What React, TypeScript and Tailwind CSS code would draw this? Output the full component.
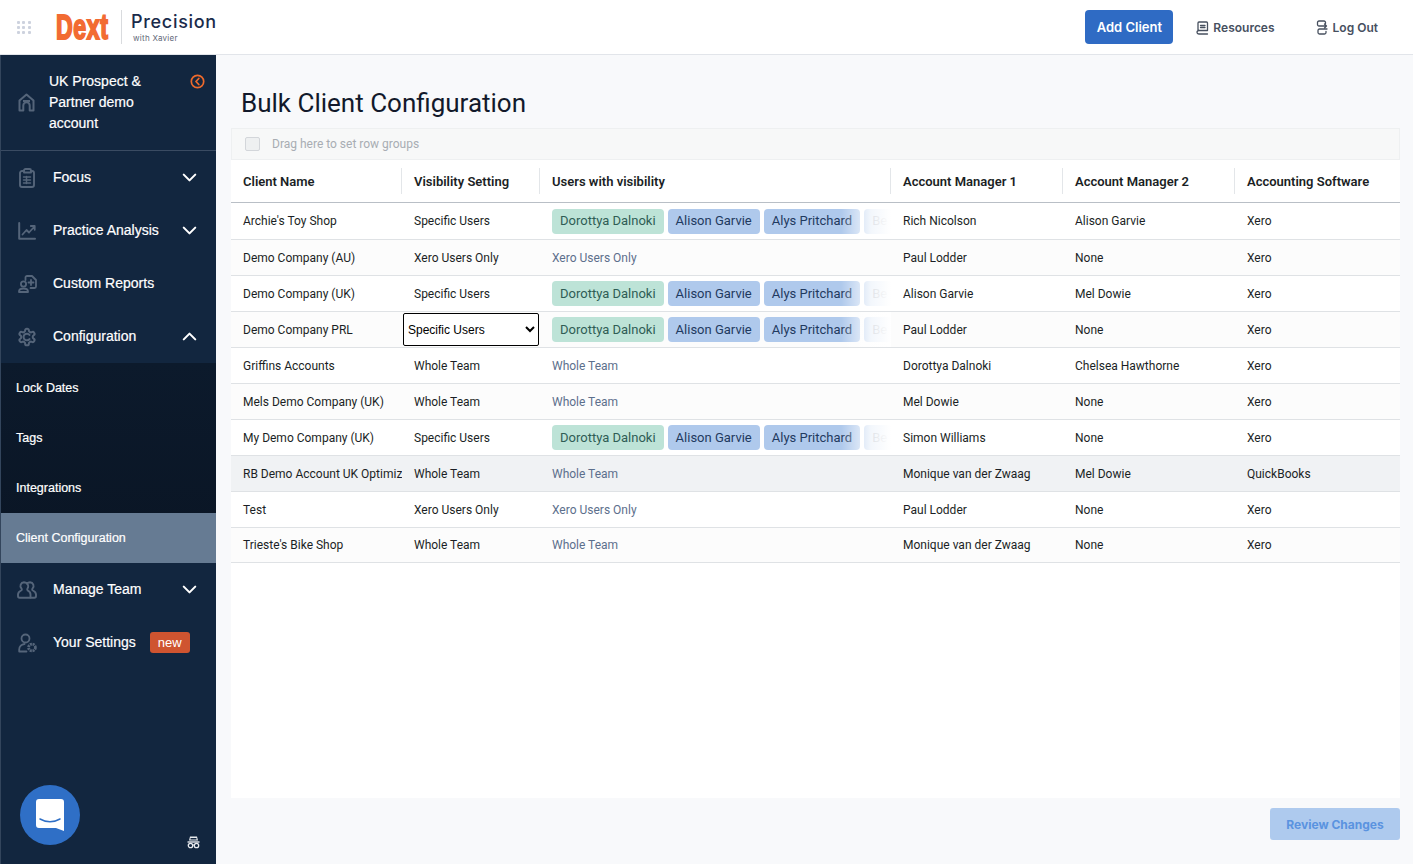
import { ChevronDown, ChevronUp } from 'lucide-react';
import type { ReactNode } from 'react';

const tagGreen = 'bg-[#bde3d7] text-[#2f5d55]';
const tagBlue = 'bg-[#afc9ec] text-[#1f3a5f]';

const rows = [
  { name: "Archie's Toy Shop", vis: 'Specific Users', users: 'tags', am1: 'Rich Nicolson', am2: 'Alison Garvie', sw: 'Xero', h: 'h-[37px]' },
  { name: 'Demo Company (AU)', vis: 'Xero Users Only', users: 'Xero Users Only', am1: 'Paul Lodder', am2: 'None', sw: 'Xero', h: 'h-[36px]' },
  { name: 'Demo Company (UK)', vis: 'Specific Users', users: 'tags', am1: 'Alison Garvie', am2: 'Mel Dowie', sw: 'Xero', h: 'h-[36px]' },
  { name: 'Demo Company PRL', vis: 'select', users: 'tags', am1: 'Paul Lodder', am2: 'None', sw: 'Xero', h: 'h-[36px]' },
  { name: 'Griffins Accounts', vis: 'Whole Team', users: 'Whole Team', am1: 'Dorottya Dalnoki', am2: 'Chelsea Hawthorne', sw: 'Xero', h: 'h-[36px]' },
  { name: 'Mels Demo Company (UK)', vis: 'Whole Team', users: 'Whole Team', am1: 'Mel Dowie', am2: 'None', sw: 'Xero', h: 'h-[36px]' },
  { name: 'My Demo Company (UK)', vis: 'Specific Users', users: 'tags', am1: 'Simon Williams', am2: 'None', sw: 'Xero', h: 'h-[36px]' },
  { name: 'RB Demo Account UK Optimiz', vis: 'Whole Team', users: 'Whole Team', am1: 'Monique van der Zwaag', am2: 'Mel Dowie', sw: 'QuickBooks', h: 'h-[36px]' },
  { name: 'Test', vis: 'Xero Users Only', users: 'Xero Users Only', am1: 'Paul Lodder', am2: 'None', sw: 'Xero', h: 'h-[36px]' },
  { name: "Trieste's Bike Shop", vis: 'Whole Team', users: 'Whole Team', am1: 'Monique van der Zwaag', am2: 'None', sw: 'Xero', h: 'h-[35px]' },
];

const iconGrey = '#55657a';

function HomeIcon() {
  return (
    <svg width="17" height="19" viewBox="0 0 17 19" fill="none" stroke={iconGrey} strokeWidth="2" strokeLinejoin="round">
      <path d="M1.500 7.500 8.500 1.500l7 6V17.500h-3.800V12.500a3.200 3.200 0 0 0-6.400 0v5H1.500z" />
      <path d="M5 8h7" />
    </svg>
  );
}

function FocusIcon() {
  return (
    <svg width="16" height="20" viewBox="0 0 16 20" fill="none" stroke={iconGrey} strokeWidth="1.900" strokeLinejoin="round" strokeLinecap="round">
      <path d="M5 3H3a2 2 0 0 0-2 2v12a2 2 0 0 0 2 2h10a2 2 0 0 0 2-2V5a2 2 0 0 0-2-2h-1" />
      <path d="M5 4.500V2.500C5 1.700 5.700 1 6.500 1h4c.8 0 1.500.7 1.500 1.500v2z" />
      <path d="M4.500 9h7M4.500 12h7M4.500 15h7M7.500 8.500v7" strokeWidth="1.500" />
    </svg>
  );
}

function AnalysisIcon() {
  return (
    <svg width="18" height="18" viewBox="0 0 18 18" fill="none" stroke={iconGrey} strokeWidth="2" strokeLinejoin="round" strokeLinecap="round">
      <path d="M1.200 1v15.800h15.800" />
      <path d="M4.500 12.500 8.500 8l2.500 2.500 5.500-6M12.800 4h3.900v3.800" strokeWidth="1.800" />
    </svg>
  );
}

function ReportsIcon() {
  return (
    <svg width="19" height="18" viewBox="0 0 19 18" fill="none" stroke={iconGrey} strokeWidth="1.800" strokeLinejoin="round" strokeLinecap="round">
      <circle cx="5.500" cy="9" r="2.600" />
      <path d="M1 17v-.5C1 14.500 3 13.500 5.500 13.500s4.500 1 4.500 3v.5z" />
      <path d="M7.500 5V2.500c0-.8.700-1.500 1.500-1.500h5l4 4v6.500c0 .8-.7 1.500-1.500 1.500h-4" />
      <path d="M13 5v5M10.500 7.500h5" />
    </svg>
  );
}

function GearIcon() {
  return (
    <svg width="20" height="20" viewBox="0 0 24 24" fill="none" stroke={iconGrey} strokeWidth="2.400" strokeLinejoin="round" strokeLinecap="round">
      <path d="M12.220 2h-.44a2 2 0 0 0-2 2v.18a2 2 0 0 1-1 1.730l-.43.250a2 2 0 0 1-2 0l-.15-.080a2 2 0 0 0-2.730.730l-.22.380a2 2 0 0 0 .730 2.730l.150.100a2 2 0 0 1 1 1.720v.510a2 2 0 0 1-1 1.740l-.150.090a2 2 0 0 0-.730 2.730l.220.380a2 2 0 0 0 2.730.730l.150-.080a2 2 0 0 1 2 0l.430.250a2 2 0 0 1 1 1.730V20a2 2 0 0 0 2 2h.440a2 2 0 0 0 2-2v-.18a2 2 0 0 1 1-1.730l.430-.250a2 2 0 0 1 2 0l.150.080a2 2 0 0 0 2.730-.730l.220-.390a2 2 0 0 0-.730-2.730l-.150-.080a2 2 0 0 1-1-1.740v-.500a2 2 0 0 1 1-1.740l.150-.090a2 2 0 0 0 .730-2.730l-.220-.380a2 2 0 0 0-2.730-.730l-.150.080a2 2 0 0 1-2 0l-.430-.250a2 2 0 0 1-1-1.730V4a2 2 0 0 0-2-2z" />
      <path d="M15 9.500A4 4 0 1 0 15 14.500" />
    </svg>
  );
}

function TeamIcon() {
  return (
    <svg width="20" height="18" viewBox="0 0 20 18" fill="none" stroke={iconGrey} strokeWidth="1.900" strokeLinejoin="round" strokeLinecap="round">
      <path d="M7 1.200A3.700 3.700 0 0 0 4.500 7.500c.5.600.4 1.500-.4 2C2.500 10.300 1 11.300 1 13.500V15c0 .9.700 1.700 1.600 1.700h14.800c.9 0 1.600-.8 1.600-1.700v-1.500c0-2.200-1.500-3.200-3.100-4-.8-.5-.9-1.400-.4-2A3.700 3.700 0 0 0 13 1.200c-1.200 0-2.200.5-3 1.300-.8-.8-1.800-1.300-3-1.300z" />
      <path d="M10 2.500c1.500 1.400 1.500 3.700.5 5-.5.700-.3 1.600.5 2.100 1.500.8 2.500 1.900 2.500 3.900v3" />
    </svg>
  );
}

function UserGearIcon() {
  return (
    <svg width="19" height="20" viewBox="0 0 19 20" fill="none" stroke={iconGrey} strokeWidth="1.800" strokeLinejoin="round" strokeLinecap="round">
      <circle cx="7.500" cy="5.500" r="4" />
      <path d="M1.200 18.500v-2c0-3 2.400-5.200 5.300-5.500M1.200 18.500H8.500" />
      <circle cx="14" cy="14.500" r="3.400" strokeWidth="2.800" strokeDasharray="2 0.700" strokeLinecap="butt" />
      <circle cx="14" cy="14.500" r="1.200" fill="#12263f" stroke="none" />
    </svg>
  );
}

function BookIcon() {
  return (
    <svg width="13" height="14" viewBox="0 0 13 14" fill="none" stroke="#47505f" strokeWidth="1.300" strokeLinejoin="round" strokeLinecap="round">
      <path d="M2 10V2c0-.6.400-1 1-1h7.500c.600 0 1 .400 1 1v7.500H2.800C1.700 9.500 1 10.200 1 11.200S1.700 13 2.800 13h8.700" />
      <path d="M4.500 4.500h4.500M4.500 6.500h4.500" />
    </svg>
  );
}

function LogoutIcon() {
  return (
    <svg width="12" height="15" viewBox="0 0 12 15" fill="none" stroke="#47505f" strokeWidth="1.300" strokeLinejoin="round" strokeLinecap="round">
      <path d="M9.500 3.500v-1C9.500 1.700 8.900 1 8 1H3c-.9 0-1.500.7-1.500 1.500V4.500C1.500 5.300 2.100 6 3 6h7.500M8.500 4l2 2-2 2" />
      <path d="M11 9H3.500C2.600 9 2 9.700 2 10.500v2C2 13.300 2.600 14 3.500 14h5c.9 0 1.500-.7 1.500-1.500V11.500" />
    </svg>
  );
}

function SpyIcon() {
  return (
    <svg width="13" height="14" viewBox="0 0 13 14" fill="none">
      <path d="M3 1.500h7l1 4H2z" fill="#e8ebef" />
      <rect x="3.500" y="3" width="6" height="1.500" fill="#12263f" />
      <path d="M0.500 7h12" stroke="#e8ebef" strokeWidth="1.400" />
      <circle cx="3.500" cy="10.500" r="2.200" stroke="#e8ebef" strokeWidth="1.300" />
      <circle cx="9.500" cy="10.500" r="2.200" stroke="#e8ebef" strokeWidth="1.300" />
      <path d="M5.700 10h1.600" stroke="#e8ebef" strokeWidth="1" />
    </svg>
  );
}

function NavItem({ icon, label, open, badge }: { icon: ReactNode; label: string; open?: boolean; badge?: boolean }) {
  return (
    <div className="h-[53px] flex items-center pl-[16px] pr-[15px]">
      <div className="w-[20px] flex justify-center">{icon}</div>
      <span className="ml-[16px] text-[14px] text-white [-webkit-text-stroke:0.2px_white]">{label}</span>
      {badge && (
        <span className="ml-[14px] h-[21px] w-[40px] flex items-center justify-center rounded-[3px] bg-[#cf5430] text-[13px] text-white">new</span>
      )}
      {open === true && <ChevronUp className="ml-auto text-white" size={23} strokeWidth={2.200} />}
      {open === false && <ChevronDown className="ml-auto text-white" size={23} strokeWidth={2.200} />}
    </div>
  );
}

function SubItem({ label, active }: { label: string; active?: boolean }) {
  return (
    <div className={`h-[50px] flex items-center pl-[15px] text-[12.500px] text-white [-webkit-text-stroke:0.2px_white] ${active ? 'bg-[#667b93]' : ''}`}>{label}</div>
  );
}

function Tag({ label, className }: { label: string; className: string }) {
  return <span className={`h-[25px] px-[8px] flex items-center rounded-[4px] whitespace-nowrap shrink-0 text-[13px] ${className}`}>{label}</span>;
}

function Tags() {
  return (
    <div className="relative h-full flex items-center gap-[4px] pl-[12px] overflow-hidden">
      <Tag label="Dorottya Dalnoki" className={tagGreen} />
      <Tag label="Alison Garvie" className={tagBlue} />
      <Tag label="Alys Pritchard" className={tagBlue} />
      <Tag label="Be" className={tagBlue} />
      <div className="absolute inset-y-0 right-0 w-[50px] bg-gradient-to-r from-transparent via-white/85 via-60% to-white" />
    </div>
  );
}

export default function App() {
  return (
    <div className="w-[1413px] h-[864px] overflow-hidden flex flex-col bg-[#f8f9fb] font-['Roboto',sans-serif]">
      {/* Top bar */}
      <header className="h-[55px] shrink-0 bg-white border-b border-[#e2e5ea] flex items-center">
        <div className="ml-[17px] w-[14px] grid grid-cols-3 gap-[2px]">
          {Array.from({ length: 9 }).map((_, i) => (
            <span key={i} className="h-[3px] w-[3px] bg-[#cdd2de] rounded-[1px]" />
          ))}
        </div>
        <div className="ml-[25px] w-[53px] h-[30px] overflow-visible">
          <span className="block origin-top-left scale-x-[0.66] font-['Liberation_Sans',sans-serif] font-bold text-[35px] leading-[30px] text-[#f26b32] [-webkit-text-stroke:2px_#f26b32] tracking-[1px] whitespace-nowrap">Dext</span>
        </div>
        <div className="ml-[12px] h-[34px] w-px bg-[#d9dbde]" />
        <div className="ml-[9px] flex flex-col">
          <span className="font-['Inter',sans-serif] text-[18px] leading-[22px] font-medium tracking-[0.7px] text-[#1b2b4b]">Precision</span>
          <span className="font-['Inter',sans-serif] text-[8px] leading-[10px] tracking-[0.3px] text-[#5f6878] ml-[2px]">with Xavier</span>
        </div>
        <div className="ml-auto flex items-center font-['Inter',sans-serif]">
          <button className="h-[34px] w-[88px] rounded-[4px] bg-[#2f6bc4] text-white text-[13px] font-semibold pt-px">Add Client</button>
          <div className="ml-[23px] flex items-center gap-[4px] text-[12px] font-semibold text-[#47505f] pt-px">
            <BookIcon />
            <span>Resources</span>
          </div>
          <div className="ml-[41px] mr-[35px] flex items-center gap-[5px] text-[12px] font-semibold text-[#47505f] pt-px">
            <LogoutIcon />
            <span>Log Out</span>
          </div>
        </div>
      </header>

      <div className="flex flex-1 min-h-0">
        {/* Sidebar */}
        <aside className="relative w-[216px] shrink-0 bg-[#12263f] border-l border-[#33455c] flex flex-col font-['Liberation_Sans',sans-serif]">
          <div className="h-[96px] shrink-0 border-b border-[#3a4b62] flex items-center pl-[17px] pr-[11px] relative">
            <HomeIcon />
            <div className="ml-[14px] w-[120px] text-[14px] leading-[21px] text-white [-webkit-text-stroke:0.2px_white]">UK Prospect &amp; Partner demo account</div>
            <svg className="absolute top-[19px] right-[11px]" width="15" height="15" viewBox="0 0 15 15" fill="none" stroke="#ee6a2c" strokeWidth="1.700">
              <circle cx="7.500" cy="7.500" r="6.200" />
              <path d="M8.800 4.500 6 7.500l2.800 3" strokeWidth="1.800" strokeLinecap="round" strokeLinejoin="round" />
            </svg>
          </div>
          <NavItem icon={<FocusIcon />} label="Focus" open={false} />
          <NavItem icon={<AnalysisIcon />} label="Practice Analysis" open={false} />
          <NavItem icon={<ReportsIcon />} label="Custom Reports" />
          <NavItem icon={<GearIcon />} label="Configuration" open={true} />
          <div className="bg-gradient-to-b from-[#0c1a2c] to-[#0a1524]">
            <SubItem label="Lock Dates" />
            <SubItem label="Tags" />
            <SubItem label="Integrations" />
            <SubItem label="Client Configuration" active />
          </div>
          <NavItem icon={<TeamIcon />} label="Manage Team" open={false} />
          <NavItem icon={<UserGearIcon />} label="Your Settings" badge />
          {/* chat launcher */}
          <div className="absolute left-[19px] bottom-[19px] h-[60px] w-[60px] rounded-full bg-[#2f6fc6] flex items-center justify-center">
            <svg width="28" height="32" viewBox="0 0 28 32" fill="none">
              <path d="M3 0h22a3 3 0 0 1 3 3v29l-8-3H3a3 3 0 0 1-3-3V3a3 3 0 0 1 3-3z" fill="white" />
              <path d="M4 20c6 3.500 14 3.500 20 0" stroke="#2f6fc6" strokeWidth="1.500" strokeLinecap="round" />
            </svg>
          </div>
          <div className="absolute right-[16px] bottom-[15px]">
            <SpyIcon />
          </div>
        </aside>

        {/* Main */}
        <main className="flex-1 min-w-0 pl-[15px] pr-[13px] flex flex-col">
          <h1 className="mt-[32px] ml-[10px] h-[41px] text-[26px] leading-[32px] text-[#12192b]">Bulk Client Configuration</h1>
          <div className="h-[32px] shrink-0 bg-[#f7f8f8] border border-[#eef0f1] flex items-center pl-[13px] text-[12px] text-[#a8adb3]">
            <span className="h-[14px] w-[15px] rounded-[2px] border border-[#d3d6da] bg-[#eef0f1]" />
            <span className="ml-[12px]">Drag here to set row groups</span>
          </div>
          <div className="h-[638px] shrink-0 bg-white text-[12px] text-[#1b1f25]">
            <div className="h-[43px] grid grid-cols-[171px_138px_351px_172px_172px_165px] border-b border-[#b9bfc6] text-[13px] font-semibold items-center">
              {['Client Name', 'Visibility Setting', 'Users with visibility', 'Account Manager 1', 'Account Manager 2', 'Accounting Software'].map((h, i) => (
                <div key={h} className={`h-[26px] flex items-center pl-[12px] pt-[2px] ${i < 5 ? 'border-r border-[#e3e6e9]' : ''}`}>{h}</div>
              ))}
            </div>
            {rows.map((r, i) => (
              <div
                key={r.name}
                className={`${r.h} grid grid-cols-[171px_138px_351px_172px_172px_165px] items-center border-b border-[#dfe2e5] ${
                  i === 7 ? 'bg-[#f0f2f4]' : i % 2 === 1 ? 'bg-[#fcfcfc]' : 'bg-white'
                }`}
              >
                <div className="pl-[12px] whitespace-nowrap overflow-hidden">{r.name}</div>
                {r.vis === 'select' ? (
                  <div className="pl-px h-full flex items-center">
                    <select className="h-[33px] w-[136px] border border-black rounded-[2px] bg-white text-[12px] text-black font-['Liberation_Sans',sans-serif]" defaultValue="Specific Users">
                      <option>Specific Users</option>
                      <option>Whole Team</option>
                      <option>Xero Users Only</option>
                    </select>
                  </div>
                ) : (
                  <div className="pl-[12px] whitespace-nowrap">{r.vis}</div>
                )}
                {r.users === 'tags' ? <Tags /> : <div className="pl-[12px] text-[#5c6f8c]">{r.users}</div>}
                <div className="pl-[12px] whitespace-nowrap">{r.am1}</div>
                <div className="pl-[12px] whitespace-nowrap">{r.am2}</div>
                <div className="pl-[12px] whitespace-nowrap">{r.sw}</div>
              </div>
            ))}
          </div>
          <div className="flex justify-end pt-[10px]">
            <button className="h-[32px] w-[130px] rounded-[3px] bg-[#aecaee] text-[#5a93e0] text-[12px] font-bold font-['Inter',sans-serif] pt-px">Review Changes</button>
          </div>
        </main>
      </div>
    </div>
  );
}
